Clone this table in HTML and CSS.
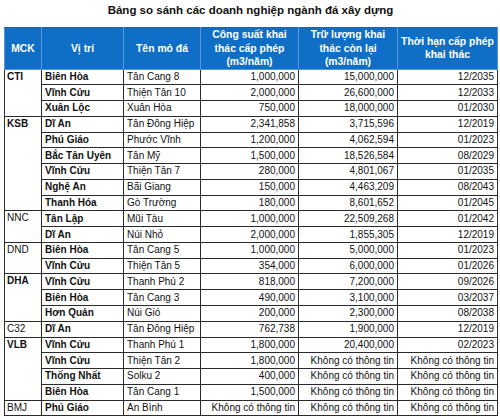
FILE: index.html
```html
<!DOCTYPE html>
<html lang="vi">
<head>
<meta charset="utf-8">
<title>Bảng so sánh các doanh nghiệp ngành đá xây dựng</title>
<link rel="stylesheet" href="styles.css">
</head>
<body>
<div class="page">
  <h1 class="title">Bảng so sánh các doanh nghiệp ngành đá xây dựng</h1>
  <table class="grid">
    <colgroup>
      <col class="c-mck"><col class="c-loc"><col class="c-mine"><col class="c-cap"><col class="c-res"><col class="c-term">
    </colgroup>
    <thead>
      <tr>
        <th>MCK</th>
        <th>Vị trí</th>
        <th>Tên mỏ đá</th>
        <th>Công suất khai<br>thác cấp phép<br>(m3/năm)</th>
        <th>Trữ lượng khai<br>thác còn lại<br>(m3/năm)</th>
        <th>Thời hạn cấp phép<br>khai thác</th>
      </tr>
    </thead>
    <tbody>
      <tr><td class="mck strong" rowspan="3">CTI</td><td class="loc">Biên Hòa</td><td class="mine">Tân Cang 8</td><td class="num">1,000,000</td><td class="num">15,000,000</td><td class="num">12/2035</td></tr>
      <tr><td class="loc">Vĩnh Cửu</td><td class="mine">Thiện Tân 10</td><td class="num">2,000,000</td><td class="num">26,600,000</td><td class="num">12/2033</td></tr>
      <tr><td class="loc">Xuân Lộc</td><td class="mine">Xuân Hòa</td><td class="num">750,000</td><td class="num">18,000,000</td><td class="num">01/2030</td></tr>
      <tr><td class="mck strong" rowspan="6">KSB</td><td class="loc">Dĩ An</td><td class="mine">Tân Đông Hiệp</td><td class="num">2,341,858</td><td class="num">3,715,596</td><td class="num">12/2019</td></tr>
      <tr><td class="loc">Phú Giáo</td><td class="mine">Phước Vĩnh</td><td class="num">1,200,000</td><td class="num">4,062,594</td><td class="num">01/2023</td></tr>
      <tr><td class="loc">Bắc Tân Uyên</td><td class="mine">Tân Mỹ</td><td class="num">1,500,000</td><td class="num">18,526,584</td><td class="num">08/2029</td></tr>
      <tr><td class="loc">Vĩnh Cửu</td><td class="mine">Thiện Tân 7</td><td class="num">280,000</td><td class="num">4,801,067</td><td class="num">01/2035</td></tr>
      <tr><td class="loc">Nghệ An</td><td class="mine">Bãi Giang</td><td class="num">150,000</td><td class="num">4,463,209</td><td class="num">08/2043</td></tr>
      <tr><td class="loc">Thanh Hóa</td><td class="mine">Gò Trường</td><td class="num">180,000</td><td class="num">8,601,652</td><td class="num">01/2045</td></tr>
      <tr><td class="mck" rowspan="2">NNC</td><td class="loc">Tân Lập</td><td class="mine">Mũi Tàu</td><td class="num">1,000,000</td><td class="num">22,509,268</td><td class="num">01/2042</td></tr>
      <tr><td class="loc">Dĩ An</td><td class="mine">Núi Nhỏ</td><td class="num">2,000,000</td><td class="num">1,855,305</td><td class="num">12/2019</td></tr>
      <tr><td class="mck" rowspan="2">DND</td><td class="loc">Biên Hòa</td><td class="mine">Tân Cang 5</td><td class="num">1,000,000</td><td class="num">5,000,000</td><td class="num">01/2023</td></tr>
      <tr><td class="loc">Vĩnh Cửu</td><td class="mine">Thiện Tân 5</td><td class="num">354,000</td><td class="num">6,000,000</td><td class="num">01/2026</td></tr>
      <tr><td class="mck strong" rowspan="3">DHA</td><td class="loc">Vĩnh Cửu</td><td class="mine">Thanh Phú 2</td><td class="num">818,000</td><td class="num">7,200,000</td><td class="num">09/2026</td></tr>
      <tr><td class="loc">Biên Hòa</td><td class="mine">Tân Cang 3</td><td class="num">490,000</td><td class="num">3,100,000</td><td class="num">03/2037</td></tr>
      <tr><td class="loc">Hơn Quản</td><td class="mine">Núi Gió</td><td class="num">200,000</td><td class="num">2,300,000</td><td class="num">08/2038</td></tr>
      <tr><td class="mck">C32</td><td class="loc">Dĩ An</td><td class="mine">Tân Đông Hiệp</td><td class="num">762,738</td><td class="num">1,900,000</td><td class="num">12/2019</td></tr>
      <tr><td class="mck strong" rowspan="4">VLB</td><td class="loc">Vĩnh Cửu</td><td class="mine">Thanh Phú 1</td><td class="num">1,800,000</td><td class="num">20,400,000</td><td class="num">02/2023</td></tr>
      <tr><td class="loc">Vĩnh Cửu</td><td class="mine">Thiện Tân 2</td><td class="num">1,800,000</td><td class="num">Không có thông tin</td><td class="num">Không có thông tin</td></tr>
      <tr><td class="loc">Thống Nhất</td><td class="mine">Solku 2</td><td class="num">400,000</td><td class="num">Không có thông tin</td><td class="num">Không có thông tin</td></tr>
      <tr><td class="loc">Biên Hòa</td><td class="mine">Tân Cang 1</td><td class="num">1,500,000</td><td class="num">Không có thông tin</td><td class="num">Không có thông tin</td></tr>
      <tr><td class="mck">BMJ</td><td class="loc">Phú Giáo</td><td class="mine">An Bình</td><td class="num">Không có thông tin</td><td class="num">Không có thông tin</td><td class="num">Không có thông tin</td></tr>
    </tbody>
  </table>
</div>
</body>
</html>
```
FILE: styles.css
```css
html, body {
  margin: 0;
  padding: 0;
  background: #ffffff;
}

.page {
  padding: 3px 3px 0 4px;
  font-family: "Liberation Sans", Arial, sans-serif;
  color: #111111;
}

.title {
  margin: 0 0 10px 0;
  font-size: 11.5px;
  line-height: 14px;
  font-weight: bold;
  text-align: center;
  color: #111111;
}

.grid {
  border-collapse: collapse;
  table-layout: fixed;
  width: 493px;
  font-size: 10px;
}

.c-mck { width: 37px; }
.c-loc { width: 82px; }
.c-mine { width: 77px; }
.c-cap { width: 98px; }
.c-res { width: 99px; }
.c-term { width: 100px; }

.grid thead tr {
  height: 41px;
}

.grid th {
  padding: 0 1px;
  background: #0f6fc6;
  color: #ffffff;
  font-size: 10.4px;
  font-weight: bold;
  line-height: 13.5px;
  text-align: center;
  vertical-align: middle;
  border: 1px solid #5b97d8;
  border-top-color: #2a5f9a;
}

.grid tbody tr {
  height: 15.77px;
}

.grid td {
  padding: 0 3px;
  line-height: 12px;
  border: 1px solid #2b2b2b;
  white-space: nowrap;
  overflow: visible;
  vertical-align: middle;
}

.grid td.mck {
  vertical-align: top;
  padding: 1px 2px 0 2px;
}

.grid td.strong {
  font-weight: bold;
}

.grid td.loc {
  font-weight: bold;
}

.grid td.num {
  text-align: right;
  padding: 0 3px 0 2px;
}
```
